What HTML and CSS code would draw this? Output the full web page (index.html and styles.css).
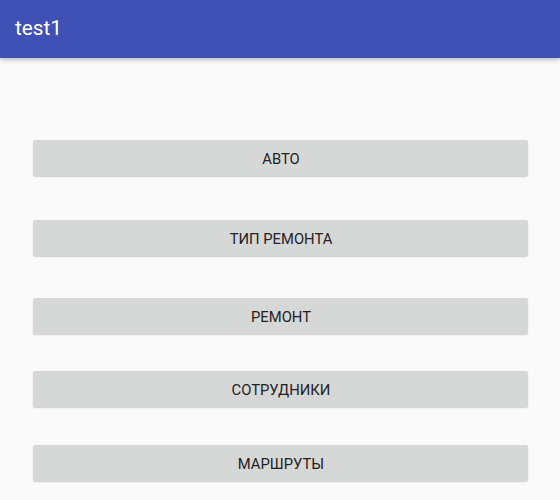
FILE: index.html
```html
<!DOCTYPE html>
<html lang="ru">
<head>
<meta charset="utf-8">
<title>test1</title>
<link rel="stylesheet" href="styles.css">
</head>
<body>
<header class="toolbar"><h1 class="title">test1</h1></header>
<main class="content">
  <button class="btn b1">Авто</button>
  <button class="btn b2">Тип ремонта</button>
  <button class="btn b3">Ремонт</button>
  <button class="btn b4">Сотрудники</button>
  <button class="btn b5">Маршруты</button>
</main>
</body>
</html>
```
FILE: styles.css
```css
html, body {
  margin: 0;
  padding: 0;
  background: #fafafa;
  font-family: Roboto, "Noto Sans", sans-serif;
  width: 560px;
  height: 500px;
  overflow: hidden;
}
.toolbar {
  height: 58px;
  background: #3f51b5;
  display: flex;
  align-items: center;
  padding-left: 15px;
  box-shadow: 0 2px 4px rgba(0,0,0,0.25);
  position: relative;
  z-index: 1;
}
.title {
  margin: 0;
  color: #fff;
  font-size: 20.8px;
  font-weight: 400;
  padding-bottom: 2px;
}
.content {
  display: flex;
  flex-direction: column;
  padding: 0 32px 0 33px;
}
.btn {
  height: 36px;
  border: none;
  border-radius: 2px;
  background: #d6d7d7;
  box-shadow: 0 1px 1.5px rgba(0,0,0,0.18);
  font-family: Roboto, "Noto Sans", sans-serif;
  font-size: 14.8px;
  color: #222;
  text-transform: uppercase;
  padding: 2px 0 0 1px;
  margin: 0;
}
.b1 { margin-top: 82px; }
.b2 { margin-top: 44px; }
.b3 { margin-top: 42px; }
.b4 { margin-top: 37px; }
.b5 { margin-top: 38px; }
```
